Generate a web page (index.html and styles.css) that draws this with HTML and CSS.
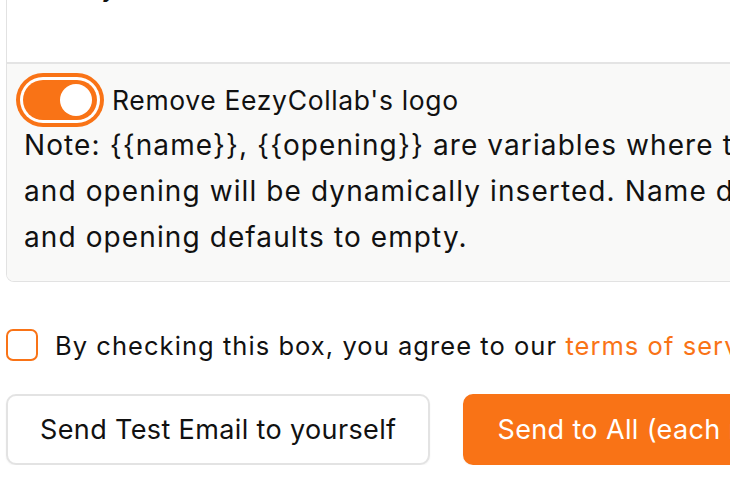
FILE: index.html
```html
<!DOCTYPE html>
<html lang="en">
<head>
<meta charset="utf-8">
<title>Send emails</title>
<link rel="stylesheet" href="styles.css">
</head>
<body>
<div class="page">
  <div class="editor">
    <div class="message"><p class="message-text">(Add your own text)</p></div>
    <div class="options">
      <div class="toggle-row">
        <span class="switch" role="switch" aria-checked="true"><span class="knob"></span></span>
        <span class="toggle-label">Remove EezyCollab's logo</span>
      </div>
      <p class="note">Note: {{name}}, {{opening}} are variables where the recipient's name<br>and opening will be dynamically inserted. Name defaults to "there"<br>and opening defaults to empty.</p>
    </div>
  </div>
  <label class="agree">
    <span class="checkbox"></span>
    <span>By checking this box, you agree to our <a class="link" href="#">terms of service</a>.</span>
  </label>
  <div class="actions">
    <button class="btn">Send Test Email to yourself</button>
    <button class="btn primary">Send to All (each recipient gets their own email)</button>
  </div>
</div>
</body>
</html>
```
FILE: styles.css
```css
html, body {
  margin: 0;
  padding: 0;
  background: #ffffff;
  overflow: hidden;
}
body {
  font-family: Inter, "Noto Sans", "DejaVu Sans", sans-serif;
  color: #111111;
}
.page {
  width: 1100px;
  padding-left: 6px;
}
.editor {
  border: 1px solid #e2e2e2;
  border-top: none;
  border-radius: 0 0 8px 8px;
  overflow: hidden;
}
.message {
  height: 62px;
  background: #ffffff;
  border-bottom: 2px solid #e4e4e4;
  overflow: hidden;
}
.message-text {
  margin: -30px 0 0 17px;
  font-size: 28px;
  line-height: 32px;
  letter-spacing: 1.1px;
  white-space: nowrap;
}
.options {
  background: #f9f9f8;
  padding: 16px 17px 21px 17px;
}
.toggle-row {
  display: flex;
  align-items: center;
  gap: 15px;
}
.switch {
  width: 74px;
  height: 40px;
  border-radius: 20px;
  background: #f97316;
  box-shadow: 0 0 0 3px #ffffff, 0 0 0 7px #f97316;
  display: flex;
  align-items: center;
  justify-content: flex-end;
  padding-right: 5px;
  box-sizing: border-box;
  margin-left: -1px;
  flex: none;
}
.knob {
  width: 32px;
  height: 32px;
  border-radius: 50%;
  background: #ffffff;
}
.toggle-label {
  font-size: 26.5px;
  letter-spacing: 0.65px;
}
.note {
  margin: 2px 0 0 0;
  font-size: 28px;
  line-height: 46px;
  letter-spacing: 1.1px;
  white-space: nowrap;
}
.agree {
  display: flex;
  align-items: center;
  gap: 17px;
  margin-top: 47px;
  font-size: 25.5px;
  letter-spacing: 1.05px;
  white-space: nowrap;
}
.checkbox {
  width: 32px;
  height: 32px;
  box-sizing: border-box;
  border: 2px solid #f97316;
  border-radius: 7px;
  background: #fff;
  flex: none;
}
.link {
  color: #f97316;
  text-decoration: none;
}
.actions {
  display: flex;
  gap: 33px;
  margin-top: 33px;
}
.btn {
  font-family: inherit;
  font-size: 27px;
  letter-spacing: 0.37px;
  height: 71px;
  padding: 0 32px;
  border-radius: 10px;
  border: 2px solid #e3e3e3;
  background: #ffffff;
  color: #111111;
  white-space: nowrap;
  box-shadow: 0 1px 2px rgba(0,0,0,0.05);
}
.btn.primary {
  background: #f97316;
  border-color: #f97316;
  color: #ffffff;
}
```
